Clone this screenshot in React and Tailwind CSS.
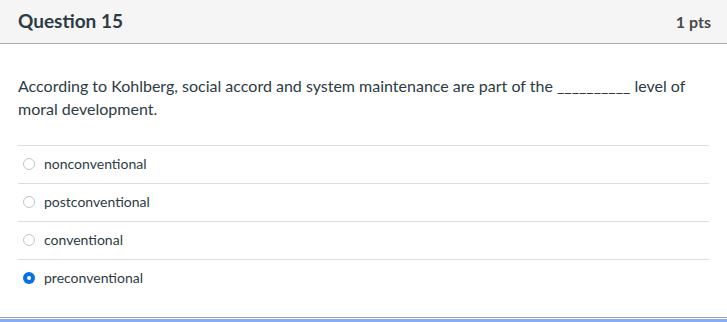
import React from 'react';

const options = [
  { label: 'nonconventional', checked: false },
  { label: 'postconventional', checked: false },
  { label: 'conventional', checked: false },
  { label: 'preconventional', checked: true },
];

const Radio = ({ checked }) =>
  checked ? (
    <span className="flex h-[12px] w-[12px] items-center justify-center rounded-full bg-[#0770e3]">
      <span className="h-[4px] w-[4px] rounded-full bg-white" />
    </span>
  ) : (
    <span className="h-[12px] w-[12px] rounded-full border border-[#c4c4c4] bg-white" />
  );

export default function App() {
  return (
    <div className="h-[322px] w-[727px] overflow-hidden bg-white font-['Lato',sans-serif] text-[#2d3b45]">
      <div className="flex h-[44px] items-center justify-between border-b border-[#aaaaaa] bg-[#f5f5f5] px-[16px] pl-[18px]">
        <h2 className="text-[19px] font-bold">Question 15</h2>
        <span className="text-[16px] font-bold text-[#4a4a4a]">1 pts</span>
      </div>
      <div className="px-[18px] pt-[30px]">
        <p className="text-[16px] leading-[23px]">
          According to Kohlberg, social accord and system maintenance are part of the __________ level of moral development.
        </p>
        <div className="mt-[25px] h-[152px]">
          {options.map((o) => (
            <label key={o.label} className="flex h-[38px] items-center gap-[9px] border-t border-[#dddddd] pb-[2px] pl-[5px] text-[14px]">
              <Radio checked={o.checked} />
              <span>{o.label}</span>
            </label>
          ))}
        </div>
      </div>
      <div className="mt-[20px] border-t border-[#a3a3a3]" />
      <div className="mt-[1px] h-[4px] bg-[#86acf6]" />
    </div>
  );
}
